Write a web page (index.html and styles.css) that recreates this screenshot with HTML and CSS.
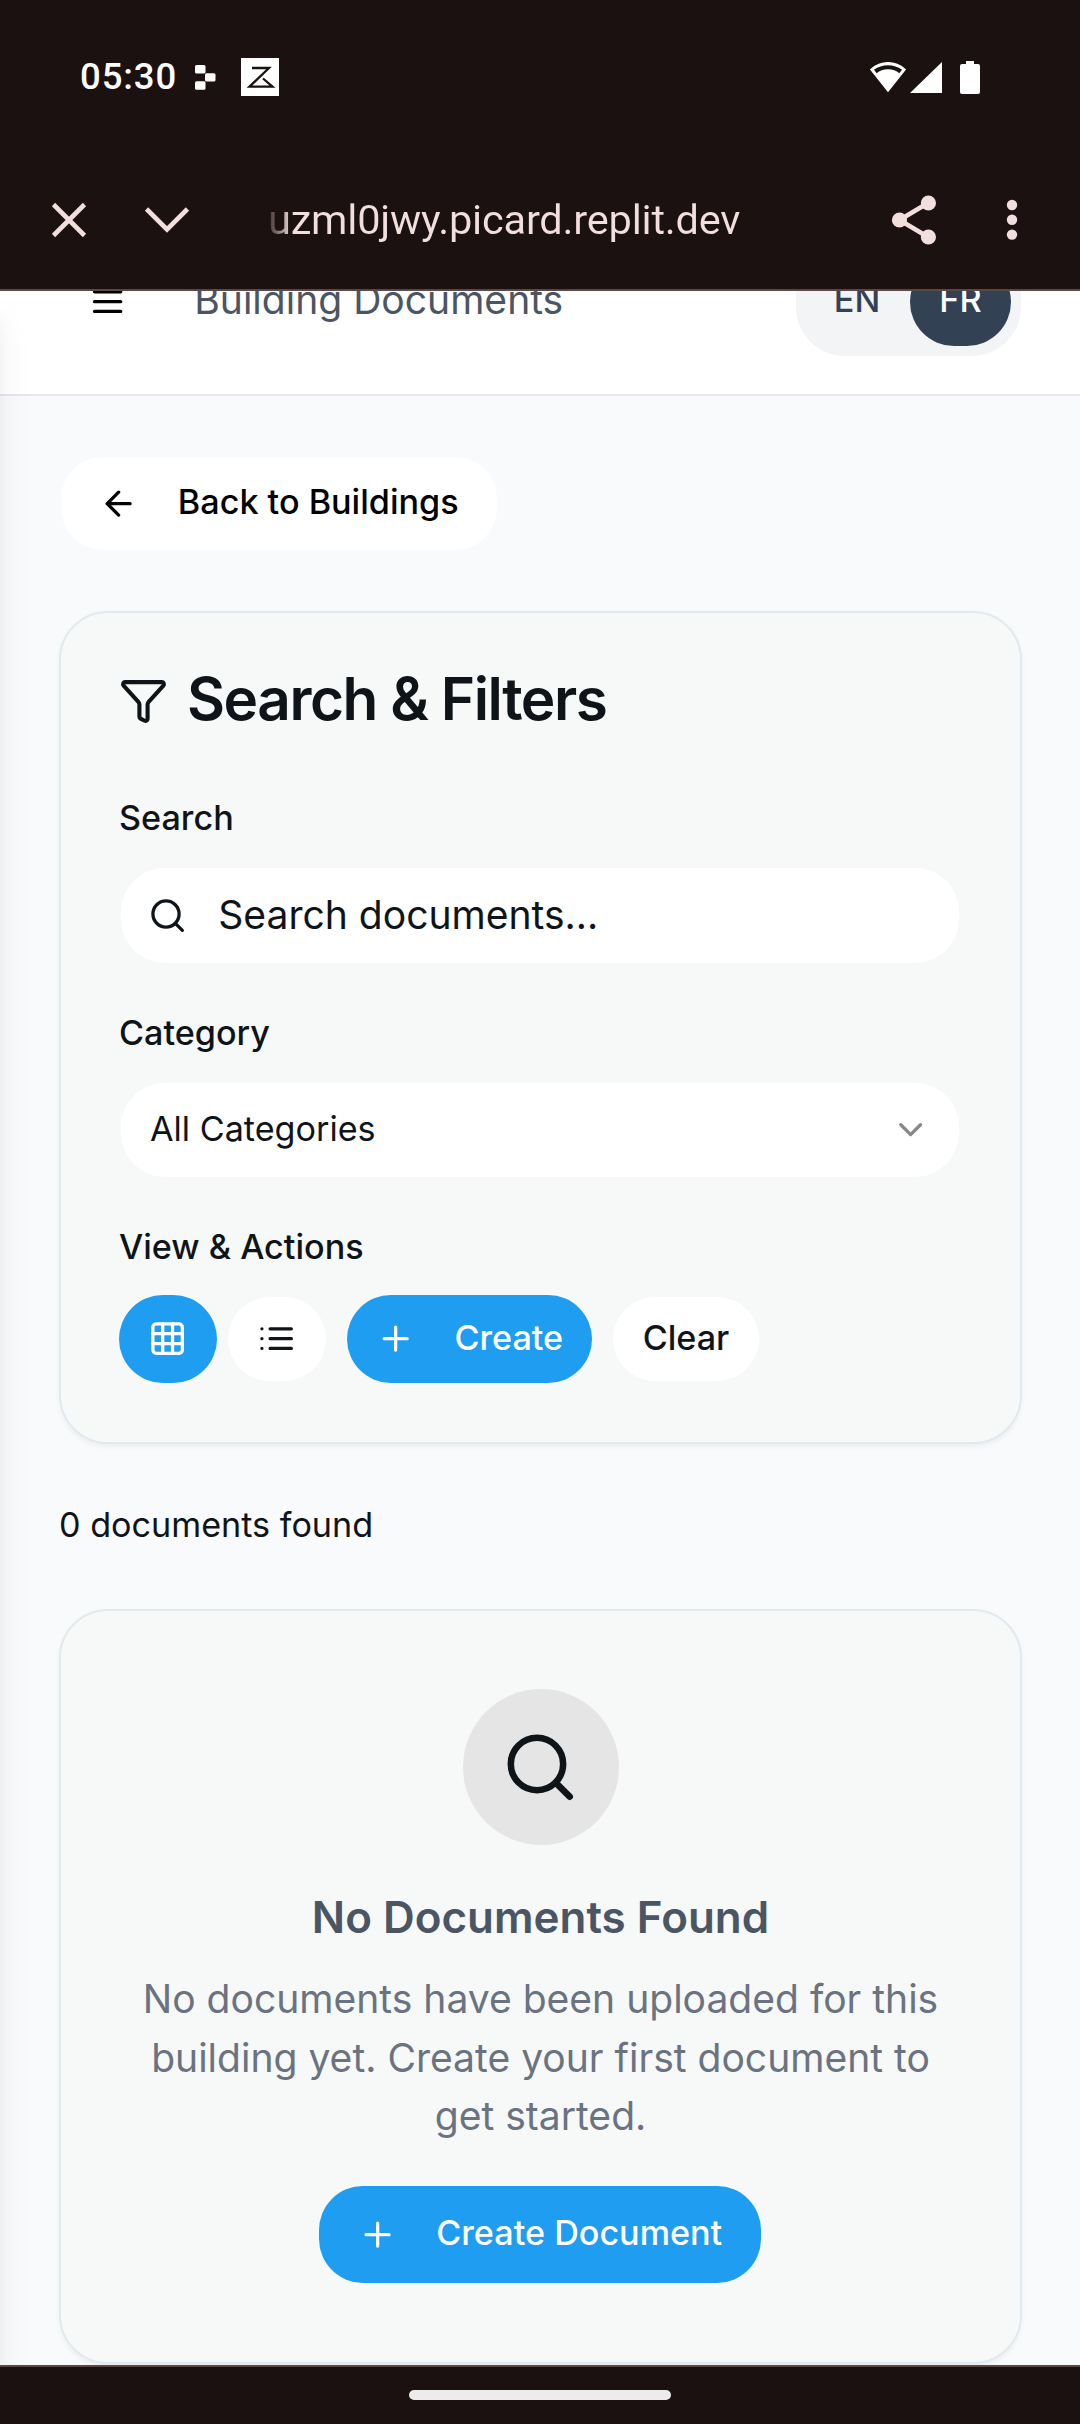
FILE: index.html
```html
<!DOCTYPE html>
<html lang="en">
<head>
<meta charset="utf-8">
<title>Building Documents</title>
<link rel="stylesheet" href="styles.css">
</head>
<body>
<div class="status-bar">
  <div class="status-left">
    <span class="clock">05:30</span>
    <svg class="replit" width="21" height="25" viewBox="0 0 21 25" fill="#fff"><rect x="0" y="0" width="10.5" height="8.6" rx="1.5"/><rect x="10" y="8.2" width="10.5" height="8.4" rx="1.5"/><rect x="0" y="16.2" width="10.5" height="8.6" rx="1.5"/></svg>
    <svg class="zapp" width="38" height="38" viewBox="0 0 38 38"><rect width="38" height="38" fill="#fff"/><path d="M11 10h17L8.500 28.700h23L22 20.500" fill="none" stroke="#1b1110" stroke-width="2.300"/></svg>
  </div>
  <div class="status-right">
    <svg width="38" height="33" viewBox="0 0 38 33"><path d="M19 1.800C12.500 1.800 6.700 4.200 2 8.500L19 30 36 8.500C31.300 4.200 25.500 1.800 19 1.800Z" fill="#fff" stroke="#fff" stroke-width="1.500"/><path d="M5 8.800C9 5.700 13.800 4.200 19 4.200S29 5.700 33 8.800L30.300 12.200C27.500 9.600 23.500 8.200 19 8.200S10.500 9.600 7.700 12.200Z" fill="#1b1110"/></svg>
    <svg class="signal" width="32" height="33" viewBox="0 0 32 33"><path d="M32 1v31H0z" fill="#fff"/></svg>
    <svg class="battery" width="20" height="33" viewBox="0 0 20 33"><path d="M6 0h8v3h4a2 2 0 0 1 2 2v26a2 2 0 0 1-2 2H2a2 2 0 0 1-2-2V5a2 2 0 0 1 2-2h4z" fill="#fff"/></svg>
  </div>
</div>
<div class="browser-bar">
  <svg class="close" width="36" height="36" viewBox="0 0 36 36"><path d="M2.500 2.500l31 31M33.500 2.500l-31 31"/></svg>
  <svg class="collapse" width="46" height="28" viewBox="0 0 46 28"><path d="M2.500 3L23 23.500 43.500 3"/></svg>
  <span class="url">uzml0jwy.picard.replit.dev</span>
  <svg class="share" width="46" height="50" viewBox="0 0 46 50"><path d="M37 8L8.500 25 37 42"/><g class="dots"><circle cx="37.400" cy="8" r="7.600"/><circle cx="8.500" cy="25" r="7.600"/><circle cx="37.400" cy="42" r="7.600"/></g></svg>
  <svg class="more" width="12" height="42" viewBox="0 0 12 42"><g class="dots"><circle cx="6" cy="6" r="5.200"/><circle cx="6" cy="20.800" r="5.200"/><circle cx="6" cy="35.600" r="5.200"/></g></svg>
</div>

<div class="viewport">
  <header class="app-header">
    <svg class="icon menu" viewBox="0 0 24 24"><path d="M4 6h16M4 12h16M4 18h16"/></svg>
    <span class="page-title">Building Documents</span>
    <div class="lang">
      <span class="lang-item"><span class="label">EN</span></span>
      <span class="lang-item active"><span class="label">FR</span></span>
    </div>
  </header>

  <main>
    <button class="btn white back"><svg class="icon" viewBox="0 0 24 24"><path d="m12 19-7-7 7-7M19 12H5"/></svg><span class="label">Back to Buildings</span></button>

    <section class="card filters">
      <h3 class="card-title"><svg class="icon funnel" viewBox="0 0 24 24"><path d="M10 20a1 1 0 0 0 .553.895l2 1A1 1 0 0 0 14 21v-7a2 2 0 0 1 .517-1.341L21.740 4.670A1 1 0 0 0 21 3H3a1 1 0 0 0-.742 1.670l7.225 7.989A2 2 0 0 1 10 14z"/></svg><span>Search &amp; Filters</span></h3>
      <div class="field-label">Search</div>
      <div class="control search"><svg class="icon" viewBox="0 0 24 24"><circle cx="11" cy="11" r="8"/><path d="m21 21-4.300-4.300"/></svg><span class="label placeholder">Search documents...</span></div>
      <div class="field-label">Category</div>
      <div class="control select"><span class="label">All Categories</span><svg class="icon chevron" viewBox="0 0 24 24"><path d="m6 9 6 6 6-6"/></svg></div>
      <div class="field-label">View &amp; Actions</div>
      <div class="actions">
        <div class="views">
          <button class="btn blue square"><svg class="icon" viewBox="0 0 24 24"><rect width="18" height="18" x="3" y="3" rx="2"/><path d="M3 9h18M3 15h18M9 3v18M15 3v18"/></svg></button>
          <button class="btn white square"><svg class="icon" viewBox="0 0 24 24"><path d="M8 6h13M8 12h13M8 18h13M3 6h.010M3 12h.010M3 18h.010"/></svg></button>
        </div>
        <button class="btn blue create"><svg class="icon" viewBox="0 0 24 24"><path d="M5 12h14M12 5v14"/></svg><span class="label">Create</span></button>
        <button class="btn white clear"><span class="label">Clear</span></button>
      </div>
    </section>

    <p class="count">0 documents found</p>

    <section class="card empty">
      <div class="badge"><svg class="icon" viewBox="0 0 24 24"><circle cx="11" cy="11" r="8"/><path d="m21 21-4.300-4.300"/></svg></div>
      <h3 class="empty-title">No Documents Found</h3>
      <p class="empty-text">No documents have been uploaded for this building yet. Create your first document to get started.</p>
      <button class="btn blue create-doc"><svg class="icon" viewBox="0 0 24 24"><path d="M5 12h14M12 5v14"/></svg><span class="label">Create Document</span></button>
    </section>
  </main>
  <div class="drawer"></div>
</div>
<div class="nav-bar"><div class="pill"></div></div>
</body>
</html>
```
FILE: styles.css
```css
* { box-sizing: border-box; margin: 0; }

body {
  width: 1080px;
  height: 2424px;
  overflow: hidden;
  display: flex;
  flex-direction: column;
  background: #1b1110;
  color: #0f1419;
  font-family: Inter, sans-serif;
  font-size: 39.05px;
}

svg { display: block; flex: none; }

/* System and browser chrome */
.status-bar {
  height: 154px;
  padding: 0 100px 0 80px;
  display: flex;
  align-items: center;
  justify-content: space-between;
}
.status-left, .status-right { display: flex; align-items: center; }
.clock {
  width: 115px;
  color: #fff;
  font-family: Roboto, sans-serif;
  font-weight: 500;
  font-size: 36.5px;
  line-height: 40px;
  letter-spacing: .9px;
  white-space: nowrap;
}
.zapp { margin-left: 25px; }
.signal { margin-left: 3px; }
.battery { margin-left: 18px; }

.browser-bar {
  height: 137px;
  padding: 0 62px 4px 51px;
  display: flex;
  align-items: center;
  border-bottom: 2px solid #5a4847;
}
.browser-bar svg { fill: none; stroke: #f2dfdd; stroke-width: 4.6px; }
.browser-bar .dots { fill: #f2dfdd; stroke: none; }
.collapse { margin-left: 57px; }
.url {
  width: 480px;
  margin-left: 78px;
  white-space: nowrap;
  font-family: Roboto, sans-serif;
  font-size: 41.5px;
  line-height: 50px;
  letter-spacing: -.2px;
  background: linear-gradient(90deg, #3a2e2d 0, #f2dfdd 24px);
  -webkit-background-clip: text;
  background-clip: text;
  color: transparent;
}
.share { margin-left: 143px; }
.more { margin-left: auto; }

/* Scrolled page */
.viewport {
  position: relative;
  height: 2074px;
  overflow: hidden;
  background: #f9fafc;
}
.icon {
  width: 39.27px;
  height: 39.27px;
  fill: none;
  stroke: currentColor;
  stroke-width: 2;
  stroke-linecap: round;
  stroke-linejoin: round;
}
.label { padding-bottom: 4px; white-space: nowrap; }

.app-header {
  height: 189px;
  margin-top: -84px;
  padding: 2px 59px 0 88px;
  display: flex;
  align-items: center;
  background: #fff;
  border-bottom: 2px solid #e5e7eb;
}
.menu { color: #000; }
.page-title {
  margin-left: 67px;
  padding-bottom: 4px;
  color: #4b5563;
}
.lang {
  margin-left: auto;
  padding: 10px;
  display: flex;
  gap: 2px;
  border-radius: 49px;
  background: #f3f4f6;
}
.lang-item {
  width: 102px;
  height: 88px;
  display: flex;
  align-items: center;
  justify-content: center;
  border-radius: 44px;
  font-size: 34.17px;
  font-weight: 500;
  color: #334155;
}
.lang-item.active { background: #334155; color: #fff; width: 101px; }

main { padding: 59px 58px 0 59px; }

.btn {
  display: flex;
  align-items: center;
  justify-content: center;
  gap: 39.27px;
  height: 88px;
  padding: 0 29.5px;
  border: 0;
  border-radius: 44px;
  font-family: inherit;
  font-size: 34.17px;
  font-weight: 500;
  color: #0f1419;
}
.btn.blue { background: #1e9df1; color: #fff; }
.btn.white {
  border: 2px solid transparent;
  background: #fff;
  background-clip: padding-box;
}
.btn.back { width: 440px; height: 97px; color: #000; }

.card {
  border: 2px solid #e1eaef;
  border-radius: 49px;
  background: #f7f9f8;
  box-shadow: 0 2.5px 5px rgba(0, 0, 0, .05);
}
.filters { height: 833px; margin-top: 59px; padding: 59px 59px 0 58px; }
.card-title {
  height: 59px;
  margin-bottom: 63px;
  display: flex;
  align-items: center;
  gap: 19px;
  font-size: 58.5px;
  font-weight: 600;
  line-height: 59px;
  letter-spacing: -.025em;
}
.card-title span { padding-bottom: 6px; }
.funnel { width: 49px; height: 49px; margin-top: -2px; }

.field-label {
  height: 48px;
  margin-bottom: 24px;
  line-height: 48px;
  font-size: 34.17px;
  font-weight: 500;
}
.control {
  height: 98px;
  margin-bottom: 44px;
  padding: 0 29px;
  display: flex;
  align-items: center;
  border: 2px solid transparent;
  border-radius: 46px;
  background: #fff;
  background-clip: padding-box;
}
.control.search { height: 99px; padding-left: 27px; }
.placeholder { margin-left: 31px; padding-bottom: 3px; }
.control.select { justify-content: space-between; font-size: 34.17px; }
.chevron { opacity: .5; }

.actions { display: flex; gap: 19px; }
.views { display: flex; gap: 9px; }
.square { width: 98px; padding: 0; }
.square.white { width: 102px; }
.create { width: 245px; }
.clear { width: 150px; }

.count {
  margin: 56px 0 60px;
  font-size: 34.17px;
  line-height: 49px;
}

.empty {
  height: 755px;
  padding-top: 78px;
  display: flex;
  flex-direction: column;
  align-items: center;
  text-align: center;
}
.badge {
  width: 156px;
  height: 156px;
  display: flex;
  align-items: center;
  justify-content: center;
  border-radius: 50%;
  background: #e5e5e6;
}
.badge .icon { width: 78.5px; height: 78.5px; }
.empty-title {
  margin-top: 38px;
  line-height: 68px;
  font-size: 43.95px;
  font-weight: 600;
  color: #4b5563;
}
.empty-text {
  width: 842px;
  margin: 19px 0 40px;
  line-height: 58.7px;
  color: #6b7280;
}
.create-doc { width: 442px; height: 97px; margin-right: 1px; }

/* Closed drawer parked past the left edge; only its shadow shows */
.drawer {
  position: absolute;
  top: 0;
  left: -300px;
  width: 300px;
  height: 2074px;
  box-shadow: 0 25px 37px -7px rgba(0, 0, 0, .1), 0 10px 15px -10px rgba(0, 0, 0, .1);
}

.nav-bar {
  height: 59px;
  display: flex;
  justify-content: center;
  border-top: 2px solid #5a4847;
}
.pill {
  width: 262px;
  height: 10px;
  margin-top: 23px;
  border-radius: 5px;
  background: #ececec;
}
```
